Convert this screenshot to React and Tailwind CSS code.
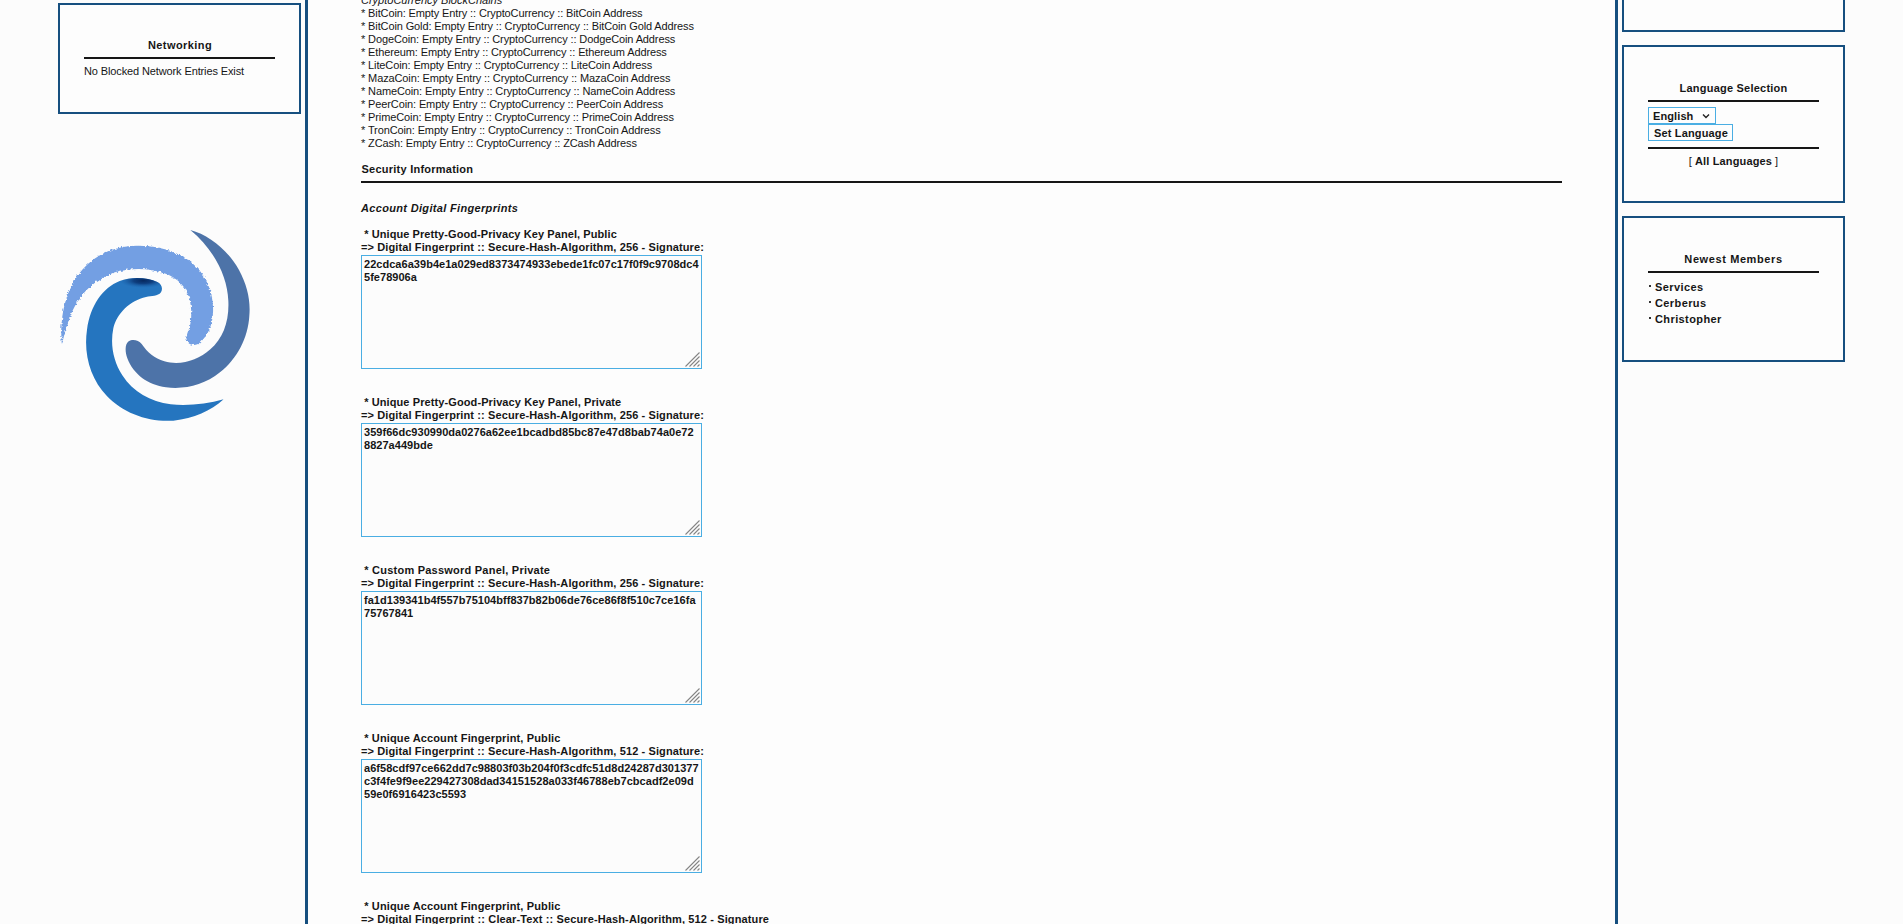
const coins = [
  "BitCoin: Empty Entry :: CryptoCurrency :: BitCoin Address",
  "BitCoin Gold: Empty Entry :: CryptoCurrency :: BitCoin Gold Address",
  "DogeCoin: Empty Entry :: CryptoCurrency :: DodgeCoin Address",
  "Ethereum: Empty Entry :: CryptoCurrency :: Ethereum Address",
  "LiteCoin: Empty Entry :: CryptoCurrency :: LiteCoin Address",
  "MazaCoin: Empty Entry :: CryptoCurrency :: MazaCoin Address",
  "NameCoin: Empty Entry :: CryptoCurrency :: NameCoin Address",
  "PeerCoin: Empty Entry :: CryptoCurrency :: PeerCoin Address",
  "PrimeCoin: Empty Entry :: CryptoCurrency :: PrimeCoin Address",
  "TronCoin: Empty Entry :: CryptoCurrency :: TronCoin Address",
  "ZCash: Empty Entry :: CryptoCurrency :: ZCash Address",
];

const fingerprints = [
  {
    title: "Unique Pretty-Good-Privacy Key Panel, Public",
    tracking: "tracking-[0.085px]",
    bits: "256",
    lines: ["22cdca6a39b4e1a029ed8373474933ebede1fc07c17f0f9c9708dc4", "5fe78906a"],
  },
  {
    title: "Unique Pretty-Good-Privacy Key Panel, Private",
    tracking: "tracking-[0.1px]",
    bits: "256",
    lines: ["359f66dc930990da0276a62ee1bcadbd85bc87e47d8bab74a0e72", "8827a449bde"],
  },
  {
    title: "Custom Password Panel, Private",
    tracking: "tracking-[0.23px]",
    bits: "256",
    lines: ["fa1d139341b4f557b75104bff837b82b06de76ce86f8f510c7ce16fa", "75767841"],
  },
  {
    title: "Unique Account Fingerprint, Public",
    tracking: "tracking-[0.135px]",
    bits: "512",
    lines: [
      "a6f58cdf97ce662dd7c98803f03b204f0f3cdfc51d8d24287d301377",
      "c3f4fe9f9ee229427308dad34151528a033f46788eb7cbcadf2e09d",
      "59e0f6916423c5593",
    ],
  },
];

function Rule({ className = "" }) {
  return <div className={`h-[2px] shrink-0 bg-[#161616] ${className}`} />;
}

function Panel({ className = "", children }) {
  return (
    <section className={`flex shrink-0 flex-col border-2 border-[#164f7f] bg-[#fdfdfd] px-6 ${className}`}>
      {children}
    </section>
  );
}

function Logo() {
  return (
    <svg className="ml-10 mt-[101px] h-[220px] w-[230px] shrink-0" viewBox="0 0 690 660">
      <defs>
        <filter id="rough" x="-5%" y="-5%" width="110%" height="110%">
          <feTurbulence type="fractalNoise" baseFrequency="0.14" numOctaves="2" seed="4" />
          <feDisplacementMap in="SourceGraphic" scale="12" xChannelSelector="R" yChannelSelector="G" />
        </filter>
        <radialGradient id="tip" cx="0.5" cy="0.5" r="0.5">
          <stop offset="0" stopColor="#06285f" />
          <stop offset="0.4" stopColor="#0a3574" stopOpacity="0.85" />
          <stop offset="1" stopColor="#1b62ac" stopOpacity="0" />
        </radialGradient>
        <clipPath id="wave">
          <path d="M551 553C512 588 462 611 400 617C324 622 250 594 200 542C152 492 130 418 141 344C151 272 188 218 239 198C275 184 322 187 352 201C366 208 369 221 363 232C353 245 335 242 318 246C270 257 231 294 220 340C210 388 220 438 247 481C279 531 331 560 392 568C445 573 500 567 551 553Z" />
        </clipPath>
      </defs>
      <path
        filter="url(#rough)"
        fill="#739fe3"
        d="M66 390C60 340 66 284 84 236C104 182 146 132 206 108C250 90 306 88 356 98C414 109 462 139 490 182C512 216 521 256 519 295C517 330 504 362 481 382C470 393 452 392 443 382C435 370 442 354 447 342C456 316 456 280 448 250C438 215 412 188 377 176C335 160 282 158 238 168C190 180 139 216 112 260C90 296 76 342 66 390Z"
      />
      <path
        fill="#4d73a8"
        d="M451 45C508 60 566 108 597 165C622 212 632 256 628 302C624 369 592 430 540 472C493 510 435 524 378 517C324 510 280 478 262 430C255 410 254 388 266 379C278 371 296 376 305 387C323 413 343 430 373 439C421 453 474 436 511 403C550 369 568 318 565 257C562 184 524 106 451 45Z"
      />
      <g clipPath="url(#wave)">
        <rect x="130" y="180" width="430" height="445" fill="#2575bf" />
        <ellipse cx="310" cy="197" rx="72" ry="22" fill="url(#tip)" />
      </g>
    </svg>
  );
}

function Field({ lines }) {
  return (
    <div className="mt-px flex h-[114px] w-[341px] flex-col border border-[#4aaee3] bg-[#fcfcfc] pl-[2px] pt-[2px]">
      <div className="flex flex-col items-start whitespace-pre tracking-[0.035px]">
        {lines.map((l) => (
          <span key={l}>{l}</span>
        ))}
      </div>
      <svg className="mb-[1px] mr-[1px] mt-auto h-[15px] w-[15px] self-end" viewBox="0 0 15 15" stroke="#858585" strokeWidth="1.1">
        <path d="M0.5 14.5L14.5 0.5M4.5 14.5L14.5 4.5M8.5 14.5L14.5 8.5M12.5 14.5L14.5 12.5" />
      </svg>
    </div>
  );
}

export default function App() {
  return (
    <div className="flex h-[924px] w-full overflow-hidden bg-[#fcfcfc] font-['Liberation_Sans',Arial,sans-serif] text-[11px] leading-[13px] text-[#161616]">
      <aside className="flex w-[305px] shrink-0 flex-col pt-[3px]">
        <Panel className="ml-[58px] h-[111px] w-[243px]">
          <h2 className="mt-[34px] pl-px text-center font-bold tracking-[0.43px]">Networking</h2>
          <Rule className="mt-[5px]" />
          <p className="mt-[6px] tracking-[-0.12px]">No Blocked Network Entries Exist</p>
        </Panel>
        <Logo />
      </aside>

      <main className="flex flex-1 flex-col border-x-[3px] border-[#164f7f] bg-[#fdfdfd] px-[53px]">
        <div className="-mt-[6px] whitespace-pre tracking-[-0.12px]">
          <p className="italic tracking-normal">CryptoCurrency BlockChains</p>
          {coins.map((c) => (
            <p key={c}>* {c}</p>
          ))}
        </div>
        <h2 className="mt-[13px] pl-[0.5px] font-bold tracking-[0.24px]">Security Information</h2>
        <Rule className="mt-[5px]" />
        <h3 className="mt-[19px] font-bold italic tracking-[0.33px]">Account Digital Fingerprints</h3>
        <div className="mt-[13px] flex flex-col whitespace-pre font-bold">
          {fingerprints.map((f) => (
            <section key={f.title} className="h-[168px] shrink-0">
              <p className={f.tracking}> * {f.title}</p>
              <p className="tracking-[0.115px]">
                {"=> Digital Fingerprint :: Secure-Hash-Algorithm, " + f.bits + " - Signature:"}
              </p>
              <Field lines={f.lines} />
            </section>
          ))}
          <p className="tracking-[0.135px]"> * Unique Account Fingerprint, Public</p>
          <p className="tracking-[0.125px]">
            {"=> Digital Fingerprint :: Clear-Text :: Secure-Hash-Algorithm, 512 - Signature"}
          </p>
        </div>
      </main>

      <aside className="flex w-[285px] shrink-0 flex-col pl-1">
        <Panel className="-mt-[10px] h-[42px] w-[223px]" />
        <Panel className="mt-[13px] h-[158px] w-[223px]">
          <h2 className="mt-[35px] text-center font-bold tracking-[0.22px]">Language Selection</h2>
          <Rule className="mt-[5px]" />
          <button className="mt-[5px] flex h-[17px] w-[68px] items-center justify-between border border-[#4aaee3] pl-1 pr-[5px] pt-[2px] font-bold tracking-[0.1px]">
            English
            <svg className="mb-[2px] h-2 w-2" viewBox="0 0 8 8" fill="none" stroke="#222" strokeWidth="1.4">
              <path d="M1 2.5L4 5.5L7 2.5" />
            </svg>
          </button>
          <button className="flex h-[17px] w-[85px] items-center whitespace-nowrap border border-[#4aaee3] pl-[5px] pt-[2px] font-bold tracking-[0.15px]">
            Set Language
          </button>
          <Rule className="mt-[6px]" />
          <p className="mt-[6px] text-center">
            [ <b className="tracking-[0.15px]">All Languages</b> ]
          </p>
        </Panel>
        <Panel className="mt-[13px] h-[146px] w-[223px]">
          <h2 className="mt-[35px] text-center font-bold tracking-[0.6px]">Newest Members</h2>
          <Rule className="mt-[5px]" />
          <ul className="mt-[6px] font-bold leading-[16px] tracking-[0.4px]">
            {["Services", "Cerberus", "Christopher"].map((m) => (
              <li key={m} className="flex items-center">
                <span className="mb-[3px] ml-[1px] mr-[4px] h-[2px] w-[2px] bg-[#333]" />
                {m}
              </li>
            ))}
          </ul>
        </Panel>
      </aside>
    </div>
  );
}
